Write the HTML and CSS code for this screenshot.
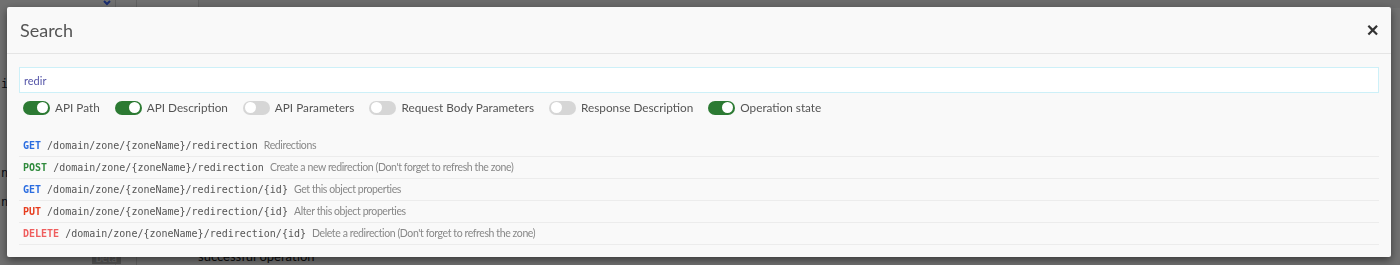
FILE: index.html
```html
<!DOCTYPE html>
<html>
<head>
<meta charset="utf-8">
<title>Search</title>
<link rel="stylesheet" href="styles.css">
</head>
<body>
<div class="page">
  <div class="side">
    <div class="side-top">
      <svg width="8" height="6" viewBox="0 0 8 6"><path d="M1 1 L4 4 L7 1" fill="none" stroke="#3a66ff" stroke-width="2"/></svg>
    </div>
    <div class="side-item">i</div>
    <div class="side-item low">n</div>
    <div class="side-item near">n</div>
    <div class="side-beta"><span class="beta">beta</span></div>
  </div>
  <div class="gutter"></div>
  <div class="content">
    <div class="content-top"></div>
    <div class="content-foot">successful operation</div>
  </div>
</div>

<div class="overlay">
  <div class="modal">
    <div class="modal-head">
      <h4>Search</h4>
      <span class="close">&#10005;</span>
    </div>
    <div class="modal-body">
      <input class="search" type="text" value="redir">
      <div class="filters">
        <label class="filter"><span class="switch on"></span>API Path</label>
        <label class="filter"><span class="switch on"></span>API Description</label>
        <label class="filter"><span class="switch"></span>API Parameters</label>
        <label class="filter"><span class="switch"></span>Request Body Parameters</label>
        <label class="filter"><span class="switch"></span>Response Description</label>
        <label class="filter"><span class="switch on"></span>Operation state</label>
      </div>
      <ul class="results">
        <li><b class="m get">GET</b> <code>/domain/zone/{zoneName}/redirection</code> <span class="desc">Redirections</span></li>
        <li><b class="m post">POST</b> <code>/domain/zone/{zoneName}/redirection</code> <span class="desc">Create a new redirection (Don't forget to refresh the zone)</span></li>
        <li><b class="m get">GET</b> <code>/domain/zone/{zoneName}/redirection/{id}</code> <span class="desc">Get this object properties</span></li>
        <li><b class="m put">PUT</b> <code>/domain/zone/{zoneName}/redirection/{id}</code> <span class="desc">Alter this object properties</span></li>
        <li><b class="m delete">DELETE</b> <code>/domain/zone/{zoneName}/redirection/{id}</code> <span class="desc">Delete a redirection (Don't forget to refresh the zone)</span></li>
      </ul>
    </div>
  </div>
</div>
</body>
</html>
```

FILE: styles.css
```css
body
{
	margin:0;
	background:#fff;
	font-family:Lato, "Open Sans", sans-serif;
	overflow:hidden;
}
.page
{
	display:flex;
	height:265px;
}
.side
{
	width:115px;
	border-right:1px solid #ddd;
	display:flex;
	flex-direction:column;
	font-family:"DejaVu Sans Mono", monospace;
	font-size:12px;
	color:#123;
}
.side-top
{
	height:8px;
	text-align:right;
	padding-right:4px;
	line-height:0;
}
.side-item
{
	margin-top:69px;
	line-height:14px;
	padding-left:1px;
}
.side-item.low
{
	margin-top:75px;
}
.side-item.near
{
	margin-top:15px;
}
.side-beta
{
	margin-top:auto;
	text-align:right;
	margin-right:-6px;
}
.beta
{
	display:inline-block;
	background:#bbb;
	color:#fff;
	font-family:Lato, sans-serif;
	font-size:11px;
	line-height:12px;
	padding:0 4px;
}
.gutter
{
	width:20px;
	border-right:1px solid #ddd;
}
.content
{
	flex:1;
	display:flex;
	flex-direction:column;
}
.content-top
{
	height:8px;
	margin-left:61px;
	border-left:1px solid #ddd;
	background:#f4f4f4;
}
.content-foot
{
	margin-top:auto;
	margin-left:61px;
	font-size:13px;
	line-height:18px;
	color:#222;
}

.overlay
{
	position:fixed;
	left:0;
	top:0;
	right:0;
	bottom:0;
	background:rgba(0,0,0,0.56);
}
.modal
{
	position:absolute;
	left:7px;
	top:7px;
	width:1384px;
	height:250px;
	background:#f9f9f9;
	border-radius:2px;
	box-shadow:0 3px 9px rgba(0,0,0,0.5);
}
.modal-head
{
	display:flex;
	align-items:center;
	justify-content:space-between;
	height:46px;
	padding:0 12px 0 13px;
	border-bottom:1px solid #e5e5e5;
}
.modal-head h4
{
	margin:0;
	font-weight:normal;
	font-size:18px;
	color:#555;
}
.close
{
	font-size:16px;
	font-weight:bold;
	color:#333;
}
.modal-body
{
	padding:13px 12px 0 12px;
}
.search
{
	display:block;
	box-sizing:border-box;
	width:100%;
	height:26px;
	margin:0;
	border:1px solid #cdf0f8;
	background:#fff;
	padding:0 4px;
	font-family:Lato, sans-serif;
	font-size:11px;
	color:#5555a8;
	outline:none;
}
.filters
{
	display:flex;
	gap:15px;
	padding:0 4px;
	height:29px;
	align-items:center;
}
.filter
{
	display:flex;
	align-items:center;
	gap:5px;
	font-size:11.75px;
	color:#555;
}
.switch
{
	width:27px;
	height:14px;
	border-radius:7px;
	background:#d6d6d6;
	position:relative;
}
.switch:after
{
	content:"";
	position:absolute;
	top:1.5px;
	left:2px;
	width:11px;
	height:11px;
	border-radius:50%;
	background:#fff;
}
.switch.on
{
	background:#2c7a33;
}
.switch.on:after
{
	left:14px;
}
.results
{
	list-style:none;
	margin:13px 0 0 0;
	padding:0;
}
.results li
{
	height:21px;
	line-height:21px;
	border-bottom:1px solid #ececec;
	padding-left:4px;
	font-family:"DejaVu Sans Mono", monospace;
	font-size:10px;
	white-space:nowrap;
}
.results code
{
	font-family:"DejaVu Sans Mono", monospace;
	font-size:10px;
	color:#555;
}
.m
{
	font-family:"DejaVu Sans Mono", monospace;
	font-size:10px;
}
.get { color:#2b6de0; }
.post { color:#2f8a3c; }
.put { color:#e63c1e; }
.delete { color:#ef5d5d; }
.desc
{
	font-family:Lato, sans-serif;
	font-size:10.5px;
	letter-spacing:-0.4px;
	color:#888;
}
```
